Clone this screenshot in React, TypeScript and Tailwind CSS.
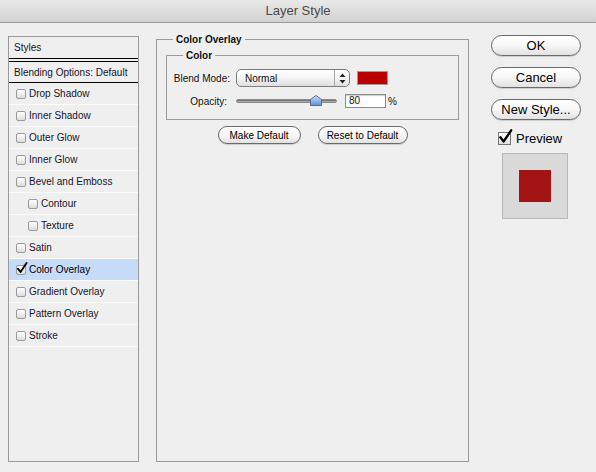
import React from "react";

const font = "font-['Liberation_Sans',Arial,sans-serif]";

const styleRows: { label: string; indent?: boolean; checked?: boolean }[] = [
  { label: "Drop Shadow" },
  { label: "Inner Shadow" },
  { label: "Outer Glow" },
  { label: "Inner Glow" },
  { label: "Bevel and Emboss" },
  { label: "Contour", indent: true },
  { label: "Texture", indent: true },
  { label: "Satin" },
  { label: "Color Overlay", checked: true },
  { label: "Gradient Overlay" },
  { label: "Pattern Overlay" },
  { label: "Stroke" },
];

function CheckMark({ size, className }: { size: number; className: string }) {
  return (
    <svg width={size} height={size} viewBox="0 0 14 14" className={`absolute ${className}`}>
      <path d="M2.2 7.8 L5.3 11.6 L12.3 1.2" fill="none" stroke="#000" strokeWidth="2.2" strokeLinecap="round" strokeLinejoin="round" />
    </svg>
  );
}

function SmallBox({ checked }: { checked?: boolean }) {
  return (
    <span className="relative w-[10px] h-[10px] shrink-0 rounded-[2px] border border-[#9a9a9a] bg-gradient-to-b from-white to-[#dcdcdc]">
      {checked && <CheckMark size={12} className="-left-[1px] -top-[4px]" />}
    </span>
  );
}

function PillButton({ label, big }: { label: string; big?: boolean }) {
  return (
    <button
      className={`${font} flex items-center justify-center rounded-full border border-[#6a6a6a] bg-gradient-to-b from-white via-[#f7f7f7] to-[#e2e2e2] text-black shadow-[0_1px_1px_rgba(0,0,0,0.15)] ${
        big ? "w-[90px] h-[21px] text-[13px]" : "w-full h-[18px] text-[10px]"
      }`}
    >
      {label}
    </button>
  );
}

function Legend({ children }: { children: React.ReactNode }) {
  return (
    <span className="-mt-[7px] ml-[16px] w-fit px-[3px] bg-[#efefef] text-[10px] leading-[13px] font-bold text-[#111]">
      {children}
    </span>
  );
}

export default function App() {
  return (
    <div className={`${font} w-[596px] h-[472px] bg-[#efefef] flex flex-col overflow-hidden`}>
      {/* window title */}
      <div className="h-[23px] shrink-0 flex items-center justify-center bg-gradient-to-b from-[#e9e9e9] to-[#d2d2d2] border-b border-[#9b9b9b] text-[13px] text-[#4a4a4a]">
        Layer Style
      </div>

      <div className="flex-1 flex pl-[8px] pt-[13px] pb-[12px]">
        {/* styles list */}
        <div className="w-[131px] border border-[#9a9a9a] flex flex-col text-[10px] text-[#15152a]">
          <div className="h-[22px] flex items-center px-[5px] border-b border-black">Styles</div>
          <div className="h-[22px] mt-[2px] flex items-center px-[5px] border-y border-black">Blending Options: Default</div>
          {styleRows.map((row) => (
            <div
              key={row.label}
              className={`h-[22px] flex items-center gap-[3px] border-b border-[#fbfbfb] ${row.indent ? "pl-[19px]" : "pl-[7px]"} ${
                row.checked ? "bg-[#c5dbf7] text-black" : ""
              }`}
            >
              <SmallBox checked={row.checked} />
              <span>{row.label}</span>
            </div>
          ))}
        </div>

        {/* settings */}
        <div className="ml-[17px] mt-[3px] w-[313px] h-[423px] border border-[#9a9a9a] flex flex-col">
          <Legend>Color Overlay</Legend>
          <div className="mt-[9px] mx-[9px] h-[65px] border border-[#9a9a9a] flex flex-col text-[10px] text-[#111]">
            <Legend>Color</Legend>
            <div className="mt-[7px] h-[18px] flex items-center">
              <span className="w-[63px] text-right">Blend Mode:</span>
              <div className="ml-[6px] w-[114px] h-[18px] rounded-[5px] border border-[#7d7d7d] bg-gradient-to-b from-white via-[#f5f5f5] to-[#dedede] flex items-center">
                <span className="flex-1 pl-[8px]">Normal</span>
                <span className="w-[15px] h-full border-l border-[#a8a8a8] flex items-center justify-center">
                  <svg width="7" height="11" viewBox="0 0 7 11">
                    <path d="M3.5 0.5 L6.5 4 L0.5 4 Z" fill="#222" />
                    <path d="M3.5 10.5 L6.5 7 L0.5 7 Z" fill="#222" />
                  </svg>
                </span>
              </div>
              <span className="ml-[7px] w-[31px] h-[14px] border border-[#9b9b9b] bg-[#bb0000]" />
            </div>
            <div className="mt-[7px] h-[14px] flex items-center">
              <span className="w-[60px] text-right">Opacity:</span>
              <div className="ml-[9px] w-[101px] h-[14px] relative flex items-center">
                <div className="w-full h-[4px] rounded-full bg-gradient-to-b from-[#5e5e5e] to-[#c4c4c4] border border-[#8a8a8a]" />
                <svg width="12" height="11" viewBox="0 0 12 11" className="absolute left-[74px] top-[1px]">
                  <defs>
                    <linearGradient id="thumb" x1="0" y1="0" x2="0" y2="1">
                      <stop offset="0" stopColor="#cfe2f7" />
                      <stop offset="1" stopColor="#5d90d2" />
                    </linearGradient>
                  </defs>
                  <path d="M6 0.5 L11.5 4.5 L11.5 10.5 L0.5 10.5 L0.5 4.5 Z" fill="url(#thumb)" stroke="#4d6f99" strokeWidth="1" />
                </svg>
              </div>
              <span className="ml-[8px] w-[41px] h-[14px] border border-[#8c8c8c] bg-white pl-[3px] leading-[12px] shadow-[inset_0_1px_1px_rgba(0,0,0,0.2)]">80</span>
              <span className="ml-[2px]">%</span>
            </div>
          </div>
          <div className="mt-[6px] flex justify-center gap-[17px]">
            <div className="w-[83px]">
              <PillButton label="Make Default" />
            </div>
            <div className="w-[90px]">
              <PillButton label="Reset to Default" />
            </div>
          </div>
        </div>

        {/* dialog actions */}
        <div className="ml-[22px] -mt-[1px] w-[90px] flex flex-col">
          <div className="flex flex-col gap-[11px]">
            <PillButton label="OK" big />
            <PillButton label="Cancel" big />
            <PillButton label="New Style..." big />
          </div>
          <div className="mt-[12px] ml-[7px] h-[13px] flex items-center gap-[5px] text-[13px] leading-[13px] text-black">
            <span className="relative w-[13px] h-[13px] border border-[#777] bg-gradient-to-b from-white to-[#e0e0e0]">
              <CheckMark size={15} className="-left-[1px] -top-[4px]" />
            </span>
            Preview
          </div>
          <div className="mt-[8px] ml-[11px] w-[66px] h-[66px] border border-[#b8b8b8] bg-[#d9d9d9] flex items-center justify-center">
            <div className="w-[32px] h-[32px] bg-[#a31414]" />
          </div>
        </div>
      </div>
    </div>
  );
}
